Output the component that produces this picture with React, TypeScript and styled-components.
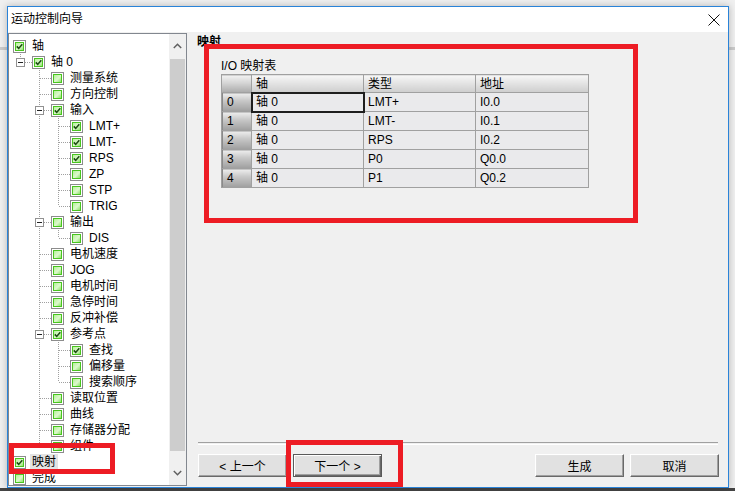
import React from 'react'
import styled, { createGlobalStyle } from 'styled-components'

type TreeNode = { label: string; checked?: boolean; selected?: boolean; children?: TreeNode[] }
type FlatRow = { node: TreeNode; level: number; guides: boolean[]; last: boolean }

const tree: TreeNode[] = [
  { label: '轴', checked: true, children: [
    { label: '轴 0', checked: true, children: [
      { label: '测量系统' },
      { label: '方向控制' },
      { label: '输入', checked: true, children: [
        { label: 'LMT+', checked: true },
        { label: 'LMT-', checked: true },
        { label: 'RPS', checked: true },
        { label: 'ZP' },
        { label: 'STP' },
        { label: 'TRIG' },
      ] },
      { label: '输出', children: [{ label: 'DIS' }] },
      { label: '电机速度' },
      { label: 'JOG' },
      { label: '电机时间' },
      { label: '急停时间' },
      { label: '反冲补偿' },
      { label: '参考点', checked: true, children: [
        { label: '查找', checked: true },
        { label: '偏移量' },
        { label: '搜索顺序' },
      ] },
      { label: '读取位置' },
      { label: '曲线' },
      { label: '存储器分配' },
      { label: '组件' },
    ] },
  ] },
  { label: '映射', checked: true, selected: true },
  { label: '完成' },
]

function flatten(nodes: TreeNode[], level: number, guides: boolean[], out: FlatRow[]) {
  nodes.forEach((node, i) => {
    const last = i === nodes.length - 1
    out.push({ node, level, guides, last })
    if (node.children) flatten(node.children, level + 1, level > 0 ? [...guides, !last] : guides, out)
  })
  return out
}

const rows = flatten(tree, 0, [], [])

const mapping = [
  ['0', '轴 0', 'LMT+', 'I0.0'],
  ['1', '轴 0', 'LMT-', 'I0.1'],
  ['2', '轴 0', 'RPS', 'I0.2'],
  ['3', '轴 0', 'P0', 'Q0.0'],
  ['4', '轴 0', 'P1', 'Q0.2'],
]

const GlobalStyle = createGlobalStyle`
  html, body { margin: 0; padding: 0; }
  body {
    width: 735px;
    height: 491px;
    overflow: hidden;
    font-family: "Liberation Sans", "Noto Sans CJK SC", sans-serif;
    font-size: 12px;
    color: #000;
  }
`

const Screen = styled.div`
  position: relative;
  width: 735px;
  height: 491px;
  box-sizing: border-box;
  padding: 6px 6px 0 7px;
  overflow: hidden;
  background: linear-gradient(to bottom, #f0f0f0 47px, #cbcbcb 47px, #cbcbcb 50px, #f0f0f0 50px, #f0f0f0 488px, #454545 488px);
`

const Window = styled.div`
  width: 722px;
  height: 482px;
  box-sizing: border-box;
  border: 1px solid #2a83d8;
  box-shadow: 0 0 7px rgba(0, 0, 0, 0.25);
  display: flex;
  flex-direction: column;
  background: #f0f0f0;
`

const TitleBar = styled.div`
  height: 25px;
  flex: none;
  background: #fff;
  display: flex;
  align-items: center;
  justify-content: space-between;
  padding: 0 8px 0 3px;
  line-height: 25px;
`

const Body = styled.div`
  flex: 1;
  display: flex;
  min-height: 0;
`

const TreeBox = styled.div`
  width: 179px;
  flex: none;
  box-sizing: border-box;
  margin: 1px 0;
  border: 1px solid #82878f;
  background: #fff;
  display: flex;
  overflow: hidden;
`

const TreeList = styled.div`
  flex: 1;
  padding: 4px 0 0 4px;
  overflow: hidden;
`

const TreeRow = styled.div`
  height: 16px;
  display: flex;
  align-items: center;
  white-space: nowrap;
`

const Guide = styled.span<{ $up?: boolean; $down?: boolean; $right?: boolean }>`
  position: relative;
  flex: none;
  width: 19px;
  height: 16px;
  &::before {
    content: '';
    display: ${p => (p.$up || p.$down ? 'block' : 'none')};
    position: absolute;
    left: 7px;
    width: 1px;
    top: ${p => (p.$up ? 0 : 8)}px;
    bottom: ${p => (p.$down ? 0 : 8)}px;
    background: repeating-linear-gradient(to bottom, #a0a0a0 0 1px, transparent 1px 2px);
  }
  &::after {
    content: '';
    display: ${p => (p.$right ? 'block' : 'none')};
    position: absolute;
    left: 8px;
    right: 0;
    top: 8px;
    height: 1px;
    background: repeating-linear-gradient(to right, #a0a0a0 0 1px, transparent 1px 2px);
  }
`

const Expander = styled.span`
  position: absolute;
  z-index: 1;
  left: 3px;
  top: 4px;
  width: 9px;
  height: 9px;
  box-sizing: border-box;
  border: 1px solid #919191;
  background: #fff;
  &::before {
    content: '';
    position: absolute;
    left: 1px;
    top: 3px;
    width: 5px;
    height: 1px;
    background: #222;
  }
`

const Check = styled.span`
  flex: none;
  width: 13px;
  height: 13px;
  box-sizing: border-box;
  border: 1px solid #8c8c8c;
  padding: 1px;
  background: #fff;
  display: flex;
`

const CheckFill = styled.span`
  flex: 1;
  display: flex;
  align-items: center;
  justify-content: center;
  border: 1px solid #49c51f;
  background: linear-gradient(135deg, #b6f09a 0%, #dcf9cc 55%, #8de168 100%);
`

const Label = styled.span<{ $selected?: boolean }>`
  margin-left: 4px;
  padding: 0 2px;
  line-height: 16px;
  background: ${p => (p.$selected ? '#e3e3e3' : 'transparent')};
`

const ScrollBar = styled.div`
  width: 17px;
  flex: none;
  display: flex;
  flex-direction: column;
  align-items: center;
  background: #f0f0f0;
`

const ScrollArrow = styled.div`
  height: 24px;
  width: 17px;
  flex: none;
  display: flex;
  align-items: center;
  justify-content: center;
`

const Thumb = styled.div`
  width: 15px;
  height: 392px;
  margin-top: 1px;
  background: #cdcdcd;
`

const Track = styled.div`
  flex: 1;
`

const Pane = styled.div`
  flex: 1;
  display: flex;
  flex-direction: column;
  min-width: 0;
`

const PaneTitle = styled.div`
  font-weight: bold;
  line-height: 16px;
  padding: 2px 0 0 10px;
`

const Group = styled.div`
  margin: 9px 0 0 34px;
`

const GroupLabel = styled.div`
  line-height: 15px;
`

const Grid = styled.table`
  border-collapse: collapse;
  table-layout: fixed;
  width: 367px;
`

const HeadCell = styled.th<{ $corner?: boolean }>`
  height: 17px;
  padding: 0 4px;
  border: 1px solid #a0a0a0;
  text-align: left;
  font-weight: normal;
  line-height: 16px;
  background: ${p => (p.$corner
    ? 'linear-gradient(to bottom, #f2f2f2 0%, #d4d4d4 45%, #ababab 100%)'
    : 'linear-gradient(to bottom, #f7f7f7 0%, #e2e2e2 50%, #cdcdcd 100%)')};
`

const RowHead = styled.th`
  height: 18px;
  padding: 0 5px;
  border: 1px solid #a0a0a0;
  text-align: left;
  font-weight: normal;
  line-height: 16px;
  background: linear-gradient(to bottom, #ededed 0%, #c8c8c8 40%, #9e9e9e 100%);
  box-shadow: inset 1px 0 0 #8a8a8a;
`

const Cell = styled.td<{ $focus?: boolean }>`
  height: 18px;
  padding: 0 4px;
  border: 1px solid #a0a0a0;
  line-height: 16px;
  background: #eaeaec;
  outline: ${p => (p.$focus ? '2px solid #1e1e1e' : 'none')};
  outline-offset: -1px;
`

const Spacer = styled.div`
  flex: 1;
`

const Footer = styled.div`
  padding: 0 9px 10px 11px;
`

const Separator = styled.div`
  height: 1px;
  margin-right: 1px;
  border-top: 1px solid #a0a0a0;
  border-bottom: 1px solid #fff;
`

const ButtonRow = styled.div`
  display: flex;
  gap: 6px;
  margin-top: 9px;
`

const Button = styled.button<{ $default?: boolean }>`
  width: 89px;
  height: 23px;
  margin: 0;
  padding: 0;
  font: inherit;
  color: #000;
  background: #e1e1e1;
  box-sizing: border-box;
  border: 1px solid;
  border-color: ${p => (p.$default ? '#5a5a5a' : '#ffffff #696969 #696969 #ffffff')};
  box-shadow: ${p => (p.$default
    ? 'inset 1px 1px 0 #fff, inset -1px -1px 0 #696969, inset -2px -2px 0 #a0a0a0'
    : 'inset -1px -1px 0 #a0a0a0, inset 1px 1px 0 #e3e3e3')};
`

const Mark = styled.div<{ $x: number; $y: number; $w: number; $h: number }>`
  position: absolute;
  left: ${p => p.$x}px;
  top: ${p => p.$y}px;
  width: ${p => p.$w}px;
  height: ${p => p.$h}px;
  box-sizing: border-box;
  border: 5px solid #ed1c24;
  pointer-events: none;
`

function CheckMark() {
  return (
    <svg width="7" height="7" viewBox="0 0 7 7">
      <path d="M0.8 3.4 L2.7 5.4 L6.3 1.2" fill="none" stroke="#1d4d12" strokeWidth="1.6" />
    </svg>
  )
}

function TreeItem({ row }: { row: FlatRow }) {
  const { node, level, guides, last } = row
  return (
    <TreeRow>
      {guides.map((g, k) => <Guide key={k} $up={g} $down={g} />)}
      {level > 0 && (
        <Guide $up $down={!last} $right>
          {node.children && <Expander />}
        </Guide>
      )}
      <Check>
        <CheckFill>{node.checked && <CheckMark />}</CheckFill>
      </Check>
      <Label $selected={node.selected}>{node.label}</Label>
    </TreeRow>
  )
}

export default function App() {
  return (
    <>
      <GlobalStyle />
      <Screen>
        <Window>
          <TitleBar>
            <span>运动控制向导</span>
            <svg width="12" height="12" viewBox="0 0 12 12">
              <path d="M0.5 0.5 L11.5 11.5 M11.5 0.5 L0.5 11.5" stroke="#111" strokeWidth="1" />
            </svg>
          </TitleBar>
          <Body>
            <TreeBox>
              <TreeList>
                {rows.map((row, i) => <TreeItem key={i} row={row} />)}
              </TreeList>
              <ScrollBar>
                <ScrollArrow>
                  <svg width="9" height="6" viewBox="0 0 9 6">
                    <path d="M0.8 5 L4.5 1.3 L8.2 5" fill="none" stroke="#606060" strokeWidth="1.5" />
                  </svg>
                </ScrollArrow>
                <Thumb />
                <Track />
                <ScrollArrow>
                  <svg width="9" height="6" viewBox="0 0 9 6">
                    <path d="M0.8 1 L4.5 4.7 L8.2 1" fill="none" stroke="#606060" strokeWidth="1.5" />
                  </svg>
                </ScrollArrow>
              </ScrollBar>
            </TreeBox>
            <Pane>
              <PaneTitle>映射</PaneTitle>
              <Group>
                <GroupLabel>I/O 映射表</GroupLabel>
                <Grid>
                  <colgroup>
                    <col style={{ width: 30 }} />
                    <col style={{ width: 112 }} />
                    <col style={{ width: 112 }} />
                    <col style={{ width: 113 }} />
                  </colgroup>
                  <thead>
                    <tr>
                      <HeadCell $corner />
                      <HeadCell>轴</HeadCell>
                      <HeadCell>类型</HeadCell>
                      <HeadCell>地址</HeadCell>
                    </tr>
                  </thead>
                  <tbody>
                    {mapping.map(([n, axis, type, addr], i) => (
                      <tr key={n}>
                        <RowHead>{n}</RowHead>
                        <Cell $focus={i === 0}>{axis}</Cell>
                        <Cell>{type}</Cell>
                        <Cell>{addr}</Cell>
                      </tr>
                    ))}
                  </tbody>
                </Grid>
              </Group>
              <Spacer />
              <Footer>
                <Separator />
                <ButtonRow>
                  <Button>&lt; 上一个</Button>
                  <Button $default>下一个 &gt;</Button>
                  <Spacer />
                  <Button>生成</Button>
                  <Button>取消</Button>
                </ButtonRow>
              </Footer>
            </Pane>
          </Body>
        </Window>
        <Mark $x={204} $y={44} $w={434} $h={179} />
        <Mark $x={286} $y={440} $w={117} $h={47} />
        <Mark $x={9} $y={443} $w={106} $h={31} />
      </Screen>
    </>
  )
}
